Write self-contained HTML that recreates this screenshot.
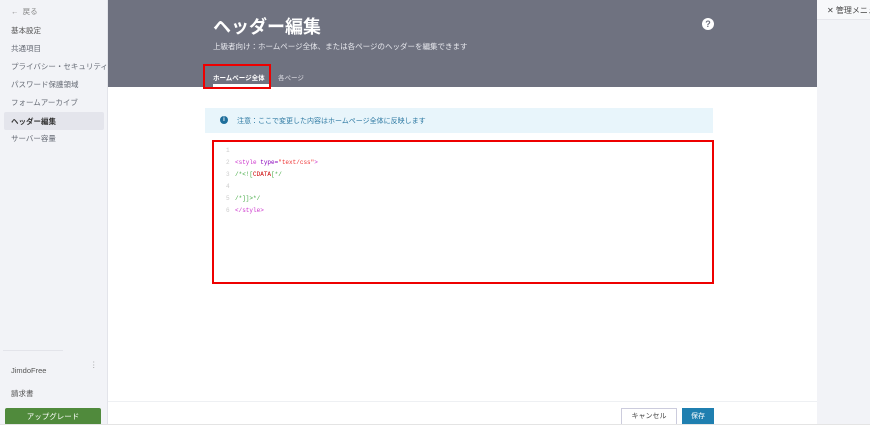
<!DOCTYPE html><html><head><meta charset="utf-8"><style>
*{margin:0;padding:0;box-sizing:border-box}
body{width:870px;height:434px;background:#fff;font-family:"Liberation Sans","Noto Sans CJK JP",sans-serif;position:relative;overflow:hidden}
.a{position:absolute}
.side{left:0;top:0;width:108px;height:424px;background:#f2f3f7;border-right:1px solid #e3e4ea;overflow:hidden}
.side div{position:absolute;left:11px;font-size:7.5px;color:#666b75;white-space:nowrap}
.main{left:108px;top:0;width:709px;height:424px;background:#fff}
.hdr{left:108px;top:0;width:709px;height:87px;background:#6f7280}
.right{left:817px;top:0;width:53px;height:424px;background:#f2f3f7;overflow:hidden}
.code{font-family:"Liberation Mono",monospace;font-size:6px}
.code div{position:absolute;left:12px}
.code span.n{color:#ccc;display:inline-block;width:9px}
</style></head><body>
<div class="a side">
<div style="top:6px;color:#888">←&nbsp;&nbsp;戻る</div>
<div style="top:25px;color:#555">基本設定</div>
<div style="top:43px">共通項目</div>
<div style="top:61px">プライバシー・セキュリティ</div>
<div style="top:79px">パスワード保護領域</div>
<div style="top:97px">フォームアーカイブ</div>
<div style="left:4px;top:112px;width:100px;height:18px;background:#e4e5ec;border-radius:2px"></div>
<div style="top:116px;color:#333;font-weight:bold">ヘッダー編集</div>
<div style="top:133px">サーバー容量</div>
<div style="left:3px;top:350px;width:60px;height:1px;background:#e3e4ea"></div>
<div style="top:366px;color:#555">JimdoFree</div>
<div style="left:90px;top:360px;color:#999">⋮</div>
<div style="top:388px;color:#555">請求書</div>
<div style="left:5px;top:408px;width:96px;height:17px;background:#508a3c;color:#fff;text-align:center;line-height:17px;border-radius:2px">アップグレード</div>
</div>
<div class="a main"></div>
<div class="a hdr">
<div class="a" style="left:105px;top:13px;font-size:18px;font-weight:bold;color:#fff">ヘッダー編集</div>
<div class="a" style="left:105px;top:41px;font-size:7.5px;color:#e8e9ee">上級者向け：ホームページ全体、または各ページのヘッダーを編集できます</div>
<div class="a" style="left:105px;top:72px;font-size:6.5px;color:#fff;font-weight:bold">ホームページ全体</div>
<div class="a" style="left:105px;top:84px;width:56px;height:3px;background:#fff"></div>
<div class="a" style="left:170px;top:72px;font-size:6.5px;color:#e0e0e6">各ページ</div>
<div class="a" style="left:594px;top:18px;width:12px;height:12px;border-radius:50%;background:#fff;color:#6f7280;font-size:9px;font-weight:bold;text-align:center;line-height:12px">?</div>
</div>
<div class="a" style="left:203px;top:64px;width:68px;height:25px;border:2px solid #e00"></div>
<div class="a right">
<div class="a" style="left:0;top:0;width:53px;height:20px;background:#f7f8fa;border-bottom:1px solid #e6e7ec"></div>
<div class="a" style="left:10px;top:5px;font-size:8px;color:#444;white-space:nowrap">✕ 管理メニュー</div>
</div>
<div class="a" style="left:205px;top:108px;width:508px;height:25px;background:#e8f5fb"></div>
<div class="a" style="left:220px;top:116px;width:8px;height:8px;border-radius:50%;background:#1f6f9c;color:#fff;font-size:6px;font-weight:bold;text-align:center;line-height:8px">i</div>
<div class="a" style="left:237px;top:116px;font-size:7px;color:#2f7aa3">注意：ここで変更した内容はホームページ全体に反映します</div>
<div class="a code" style="left:212px;top:140px;width:502px;height:144px;border:2px solid #e00">
<div style="top:5px"><span class="n">1</span></div>
<div style="top:17px"><span class="n">2</span><span style="color:#c3c">&lt;style </span><span style="color:#80b">type=</span><span style="color:#e33">"text/css"</span><span style="color:#c3c">&gt;</span></div>
<div style="top:29px"><span class="n">3</span><span style="color:#4a4">/*&lt;![</span><span style="color:#c00">CDATA</span><span style="color:#4a4">[*/</span></div>
<div style="top:41px"><span class="n">4</span></div>
<div style="top:53px"><span class="n">5</span><span style="color:#4a4">/*]]&gt;*/</span></div>
<div style="top:65px"><span class="n">6</span><span style="color:#c3c">&lt;/style&gt;</span></div>
</div>
<div class="a" style="left:108px;top:401px;width:709px;height:1px;background:#eef0f3"></div>
<div class="a" style="left:621px;top:408px;width:56px;height:17px;border:1px solid #ccd;background:#fff;font-size:7px;color:#444;text-align:center;line-height:15px">キャンセル</div>
<div class="a" style="left:682px;top:408px;width:32px;height:17px;background:#1f7fb0;font-size:7px;color:#fff;text-align:center;line-height:17px">保存</div>
<div class="a" style="left:0;top:424px;width:870px;height:10px;background:#fff;border-top:1px solid #e4e4e4"></div>
</body></html>
